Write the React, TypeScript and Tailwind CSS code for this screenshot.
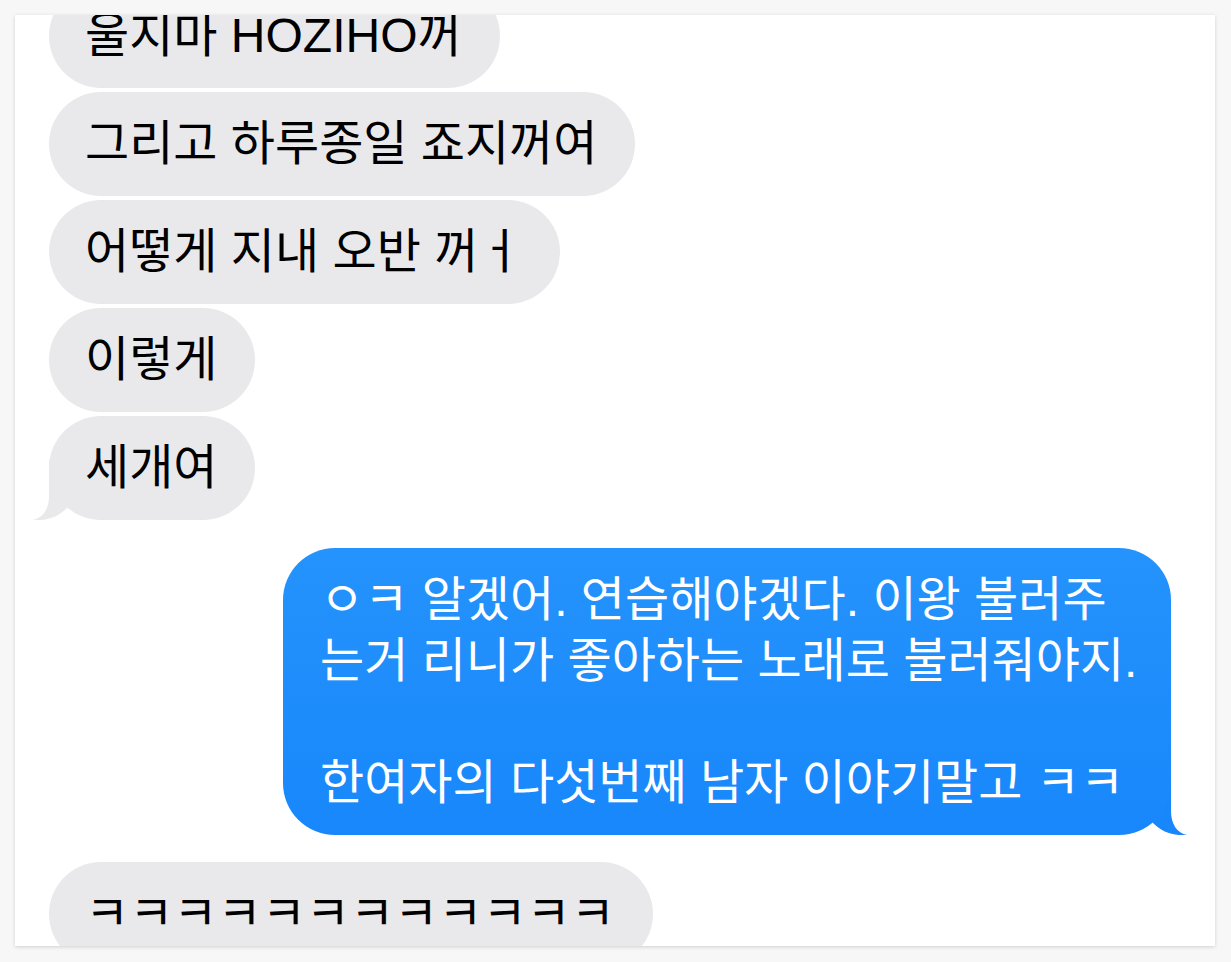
import React from "react";

const font = "font-['Liberation_Sans','Noto_Sans_CJK_KR',sans-serif]";

function Gray({ children, tail = false }: { children: React.ReactNode; tail?: boolean }) {
  return (
    <div className="relative w-fit">
      <div className="relative z-10 w-fit whitespace-nowrap rounded-[52px] bg-[#e9e9eb] pl-[36px] pr-[38px] pt-[21px] pb-[22px] text-[48px] leading-[61px] text-black">
        {children}
      </div>
      {tail && (
        <svg
          className="absolute bottom-0 left-[-16px] z-0"
          width="60"
          height="60"
          viewBox="0 0 60 60"
        >
          <path
            d="M16 0 L16 36 C16 49 10 58 0 60 C14 61 25 57 34 48 L50 20 L50 0 Z"
            fill="#e9e9eb"
          />
        </svg>
      )}
    </div>
  );
}

export default function App() {
  return (
    <div className={`h-[962px] w-[1231px] bg-[#f7f7f7] pt-[15px] pl-[15px] ${font}`}>
      <div className="flex h-[931px] w-[1200px] flex-col overflow-hidden bg-white shadow-[0_1px_4px_rgba(0,0,0,0.16)]">
        <div className="mt-[-31px] flex flex-col gap-[4px] pl-[34px]">
          <Gray>울지마 HOZIHO꺼</Gray>
          <Gray>그리고 하루종일 죠지꺼여</Gray>
          <Gray>어떻게 지내 오반 꺼ㅓ</Gray>
          <Gray>이렇게</Gray>
          <Gray tail>세개여</Gray>
        </div>
        <div className="mt-[28px] flex justify-end pr-[44px]">
          <div className="relative">
            <div className="relative z-10 w-[888px] rounded-[52px] bg-gradient-to-b from-[#2593fc] to-[#1787fb] pl-[37px] pr-[20px] pt-[21px] pb-[22px] text-[48px] leading-[61px] text-white">
              <div className="whitespace-nowrap">ㅇㅋ 알겠어. 연습해야겠다. 이왕 불러주</div>
              <div className="whitespace-nowrap">는거 리니가 좋아하는 노래로 불러줘야지.</div>
              <div className="h-[61px]" />
              <div className="whitespace-nowrap">한여자의 다섯번째 남자 이야기말고 ㅋㅋ</div>
            </div>
            <svg
              className="absolute bottom-0 right-[-16px] z-0"
              width="60"
              height="60"
              viewBox="0 0 60 60"
            >
              <path
                d="M44 0 L44 36 C44 49 50 58 60 60 C46 61 35 57 26 48 L10 20 L10 0 Z"
                fill="#1787fb"
              />
            </svg>
          </div>
        </div>
        <div className="mt-[27px] pl-[34px]">
          <Gray>ㅋㅋㅋㅋㅋㅋㅋㅋㅋㅋㅋㅋ</Gray>
        </div>
      </div>
    </div>
  );
}
